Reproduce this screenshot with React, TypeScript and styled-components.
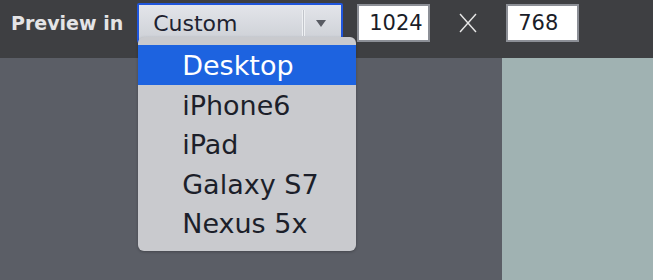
import styled, { createGlobalStyle } from "styled-components";

const GlobalStyle = createGlobalStyle`
  html, body {
    margin: 0;
    padding: 0;
    background: #5b5e66;
  }
  body {
    font-family: "DejaVu Sans", "Liberation Sans", sans-serif;
    width: 653px;
    height: 280px;
    overflow: hidden;
  }
`;

const devices = ["Desktop", "iPhone6", "iPad", "Galaxy S7", "Nexus 5x"];

const App = () => {
  return (
    <Page>
      <GlobalStyle />
      <Toolbar>
        <Label>Preview in</Label>
        <SelectWrap>
          <SelectBox>
            <SelectValue>Custom</SelectValue>
            <Divider />
            <Arrow />
          </SelectBox>
          <Menu>
            {devices.map((d, i) => (
              <MenuItem key={d} active={i === 0}>
                {d}
              </MenuItem>
            ))}
          </Menu>
        </SelectWrap>
        <SizeInput gap={14}>1024</SizeInput>
        <Times>
          <svg width="20" height="22" viewBox="0 0 20 22">
            <line x1="2" y1="2" x2="18" y2="20" stroke="#e8e8e8" strokeWidth="1.4" />
            <line x1="18" y1="2" x2="2" y2="20" stroke="#e8e8e8" strokeWidth="1.4" />
          </svg>
        </Times>
        <SizeInput gap={0}>768</SizeInput>
      </Toolbar>
      <Stage>
        <Gutter />
        <Canvas />
      </Stage>
    </Page>
  );
};

const Page = styled.div`
  width: 653px;
  height: 280px;
  display: flex;
  flex-direction: column;
`;

const Toolbar = styled.div`
  height: 58px;
  flex: none;
  background: #3e3f42;
  display: flex;
  flex-direction: row;
  align-items: flex-start;
  padding: 3px 0 0 11px;
  box-sizing: border-box;
`;

const Label = styled.div`
  color: #e4e4e6;
  font-size: 19px;
  font-weight: bold;
  line-height: 40px;
  margin-right: 14px;
`;

const SelectWrap = styled.div`
  position: relative;
`;

const SelectBox = styled.div`
  width: 206px;
  height: 40px;
  box-sizing: border-box;
  border: 2px solid #2056dc;
  border-radius: 2px;
  background: linear-gradient(#e3e5ea, #cdd0d6);
  display: flex;
  flex-direction: row;
  align-items: center;
`;

const SelectValue = styled.div`
  flex: 1;
  padding-left: 14px;
  font-size: 22px;
  color: #1e2230;
`;

const Divider = styled.div`
  width: 3px;
  height: 26px;
  border-left: 1px solid #eef0f3;
  border-right: 1px solid #eef0f3;
  background: #c2c5cb;
  box-sizing: border-box;
  margin-right: 11px;
`;

const Arrow = styled.div`
  width: 0;
  height: 0;
  border-left: 5px solid transparent;
  border-right: 5px solid transparent;
  border-top: 7px solid #585b63;
  margin-right: 15px;
`;

const Menu = styled.div`
  position: absolute;
  left: 1px;
  top: 34px;
  width: 218px;
  box-sizing: border-box;
  padding: 8px 0 8px;
  background: #c9cace;
  border-radius: 6px;
  box-shadow: 0 1px 3px rgba(0, 0, 0, 0.25);
`;

const MenuItem = styled.div<{ active?: boolean }>`
  height: 39.5px;
  line-height: 41px;
  padding-left: 44px;
  font-size: 27px;
  color: ${(p) => (p.active ? "#ffffff" : "#1c1f2a")};
  background: ${(p) => (p.active ? "#1d63e0" : "transparent")};
`;

const SizeInput = styled.div<{ gap: number }>`
  width: 73px;
  height: 38px;
  margin-top: 1px;
  margin-left: ${(p) => p.gap}px;
  box-sizing: border-box;
  border: 2px solid #8c8f96;
  background: #ffffff;
  padding-left: 10px;
  font-size: 21px;
  line-height: 34px;
  color: #1a1d28;
`;

const Times = styled.div`
  display: flex;
  align-items: center;
  justify-content: center;
  width: 76px;
  height: 40px;
`;

const Stage = styled.div`
  flex: 1;
  display: flex;
  flex-direction: row;
`;

const Gutter = styled.div`
  width: 502px;
  background: #5b5e66;
`;

const Canvas = styled.div`
  flex: 1;
  background: #a0b2b2;
`;

export default App;
